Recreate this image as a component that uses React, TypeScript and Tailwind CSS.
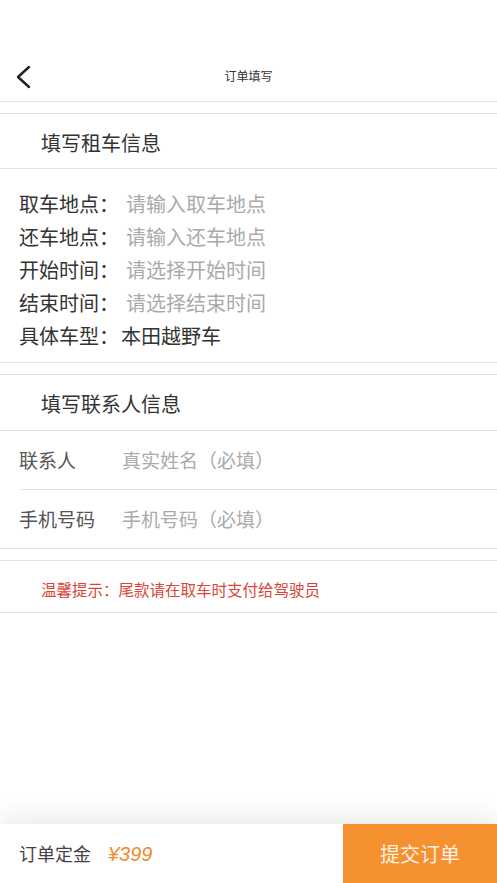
import React from "react";

const font = { fontFamily: '"Noto Sans CJK SC", "Noto Sans", sans-serif' };

function Line({ inset = false }: { inset?: boolean }) {
  return <div className={`h-px bg-[#e3e3e3] ${inset ? "ml-[20px]" : ""}`} />;
}

export default function App() {
  const rows: [string, string, boolean][] = [
    ["取车地点：", "请输入取车地点", true],
    ["还车地点：", "请输入还车地点", true],
    ["开始时间：", "请选择开始时间", true],
    ["结束时间：", "请选择结束时间", true],
    ["具体车型：", "本田越野车", false],
  ];
  return (
    <div className="flex h-[883px] w-[497px] flex-col overflow-hidden bg-white" style={font}>
      <div className="h-[50px]" />
      <div className="relative flex h-[51px] items-center justify-center">
        <svg className="absolute left-[14px] top-[15px]" width="18" height="24" viewBox="0 0 18 24">
          <path d="M15 2 L4 12 L15 22" fill="none" stroke="#222" strokeWidth="2.4" strokeLinecap="round" strokeLinejoin="round" />
        </svg>
        <span className="text-[12px] text-[#333]">订单填写</span>
      </div>
      <Line />
      <div className="h-[11px]" />
      <Line />
      <div className="flex h-[54px] items-center pl-[41px] pt-[4px] text-[20px] text-[#333]">填写租车信息</div>
      <Line />
      <div className="flex flex-col pb-[10px] pt-[18px]">
        {rows.map(([l, v, ph]) => (
          <div key={l} className="flex h-[33px] items-center whitespace-nowrap text-[20px]">
            <span className="w-[126px] shrink-0 pl-[19px] text-[#333]">{l}</span>
            <span className={ph ? "text-[#aaaaaa]" : "-ml-[5px] text-[#333]"}>{v}</span>
          </div>
        ))}
      </div>
      <Line />
      <div className="h-[11px]" />
      <Line />
      <div className="flex h-[55px] items-center pl-[41px] pt-[2px] text-[20px] text-[#333]">填写联系人信息</div>
      <Line />
      <div className="flex h-[58px] items-center whitespace-nowrap text-[19px]">
        <span className="w-[122px] shrink-0 pl-[19px] text-[#555]">联系人</span>
        <span className="text-[#aaaaaa]">真实姓名（必填）</span>
      </div>
      <Line inset />
      <div className="flex h-[58px] items-center whitespace-nowrap text-[19px]">
        <span className="w-[122px] shrink-0 pl-[19px] text-[#555]">手机号码</span>
        <span className="text-[#aaaaaa]">手机号码（必填）</span>
      </div>
      <Line />
      <div className="h-[11px]" />
      <Line />
      <div className="flex h-[51px] items-center pl-[41px] pt-[7px] text-[15.5px] text-[#d8453a]">温馨提示：尾款请在取车时支付给驾驶员</div>
      <Line />
      <div className="mt-auto flex h-[59px] bg-white shadow-[0_-8px_24px_rgba(0,0,0,0.08)]">
        <div className="flex flex-1 items-center pl-[19px]">
          <span className="text-[18px] text-[#444]">订单定金</span>
          <span className="ml-[17px] text-[20px] italic text-[#f08a30]" style={{ fontFamily: '"Liberation Sans", Arial, sans-serif' }}>¥399</span>
        </div>
        <div className="flex w-[154px] items-center justify-center bg-[#f5912e] text-[20px] text-[#fdf2e6]">提交订单</div>
      </div>
    </div>
  );
}
